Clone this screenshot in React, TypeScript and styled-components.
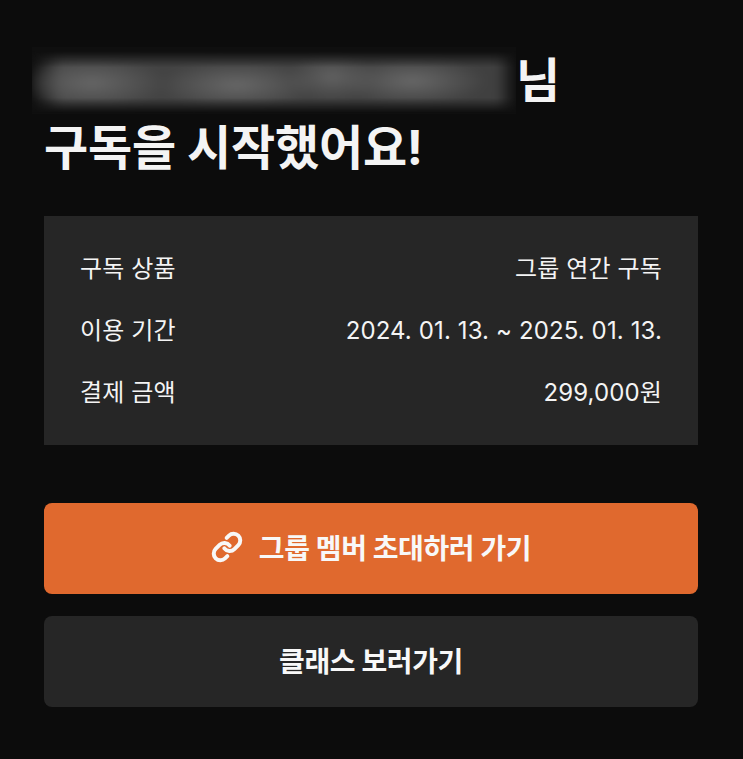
import styled, { createGlobalStyle } from "styled-components";

const GlobalStyle = createGlobalStyle`
  html, body {
    margin: 0;
    padding: 0;
    background: #0c0c0c;
  }
  * {
    box-sizing: border-box;
  }
`;

const Page = styled.main`
  width: 743px;
  height: 759px;
  padding: 47px 45px 0 44px;
  background: #0c0c0c;
  color: #f4f4f4;
  font-family: Inter, "Noto Sans CJK KR", sans-serif;
  overflow: hidden;
`;

const Title = styled.h1`
  margin: 0;
  font-size: 48px;
  font-weight: 700;
  line-height: 68px;
  letter-spacing: -0.2px;
  color: #f4f4f4;
`;

const NameLine = styled.div`
  display: flex;
  align-items: center;
  height: 67px;
  margin-left: -12px;
`;

const BlurredName = styled.div`
  width: 484px;
  height: 67px;
  overflow: hidden;
  background: #0f0f0f;
`;

const BlurredInk = styled.div`
  width: 100%;
  height: 100%;
  background:
    radial-gradient(ellipse 75px 26px at 60px 36px, #666666, transparent),
    radial-gradient(ellipse 80px 24px at 205px 38px, #686868, transparent),
    radial-gradient(ellipse 45px 24px at 300px 30px, #626262, transparent),
    radial-gradient(ellipse 75px 24px at 380px 34px, #686868, transparent),
    linear-gradient(to right, #0f0f0f, #444444 6%, #404040 96%, #0f0f0f);
  mask-image: linear-gradient(transparent 6%, #000 30%, #000 76%, transparent 98%);
  filter: blur(4px);
`;

const Summary = styled.section`
  display: flex;
  flex-direction: column;
  gap: 22px;
  height: 229px;
  margin-top: 34px;
  padding: 33px 36px 0 36px;
  background: #262626;
`;

const Row = styled.div`
  display: flex;
  justify-content: space-between;
  align-items: center;
  height: 40px;
  font-size: 24px;
  line-height: 40px;
  font-weight: 400;
  letter-spacing: 0.12px;
`;

const Actions = styled.div`
  display: flex;
  flex-direction: column;
  gap: 22px;
  margin-top: 58px;
`;

const Button = styled.button<{ $primary?: boolean }>`
  display: flex;
  align-items: center;
  justify-content: center;
  gap: 16px;
  width: 100%;
  height: 91px;
  padding: 0 0 3px;
  border: 0;
  border-radius: 8px;
  background: ${(props) => (props.$primary ? "#e0692e" : "#262626")};
  color: #f8f8f8;
  font-family: inherit;
  font-size: 28px;
  font-weight: 700;
  letter-spacing: -0.4px;
`;

const rows = [
  ["구독 상품", "그룹 연간 구독"],
  ["이용 기간", "2024. 01. 13. ~ 2025. 01. 13."],
  ["결제 금액", "299,000원"],
];

function LinkIcon() {
  return (
    <svg width="32" height="32" viewBox="0 0 24 24" fill="none" stroke="currentColor" strokeWidth="3" strokeLinecap="round" strokeLinejoin="round">
      <path d="M10 13a5 5 0 0 0 7.54.54l3-3a5 5 0 0 0-7.07-7.07l-1.72 1.71" />
      <path d="M14 11a5 5 0 0 0-7.54-.54l-3 3a5 5 0 0 0 7.07 7.07l1.71-1.71" />
    </svg>
  );
}

export default function App() {
  return (
    <Page>
      <GlobalStyle />
      <Title>
        <NameLine>
          <BlurredName>
            <BlurredInk />
          </BlurredName>
          님
        </NameLine>
        구독을 시작했어요!
      </Title>
      <Summary>
        {rows.map(([label, value]) => (
          <Row key={label}>
            <span>{label}</span>
            <span>{value}</span>
          </Row>
        ))}
      </Summary>
      <Actions>
        <Button $primary>
          <LinkIcon />
          그룹 멤버 초대하러 가기
        </Button>
        <Button>클래스 보러가기</Button>
      </Actions>
    </Page>
  );
}
